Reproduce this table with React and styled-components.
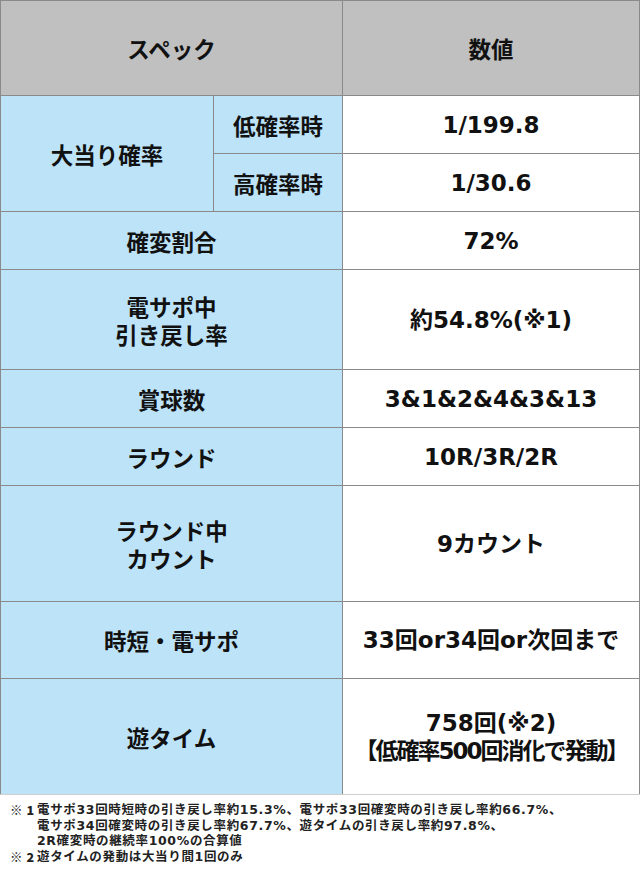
import React from 'react';
import styled, { createGlobalStyle } from 'styled-components';

// reseteo basico de la pagina
const GlobalStyle = createGlobalStyle`
  * {
    margin: 0;
    padding: 0;
    box-sizing: border-box;
  }
  body {
    background: #fff;
    font-family: "DejaVu Sans", "Noto Sans CJK JP", sans-serif;
    color: #111;
  }
`;

const Page = styled.div`
  width: 640px;
  height: 872px;
  background: #fff;
`;

// la tabla se arma con grid; el gap hace de linea de borde
const SpecGrid = styled.div`
  display: grid;
  grid-template-columns: 212px 128px 1fr;
  grid-template-rows: 94px 57px 57px 57px 99px 57px 57px 115px 76px 115px;
  gap: 1px;
  padding: 1px 1px 0 1px;
  background: #8a8a8a;
  border-bottom: 1px solid #cfcfcf;
`;

const Cell = styled.div`
  display: flex;
  align-items: center;
  justify-content: center;
  text-align: center;
  font-weight: 700;
  font-size: 22.5px;
  line-height: 28px;
  color: #111;
  grid-column: ${(p) => p.$col || 'auto'};
  grid-row: ${(p) => p.$row || 'auto'};
`;

const HeadCell = styled(Cell)`
  background: #c0c0c0;
  font-family: "Noto Sans CJK JP", sans-serif;
`;

const LabelCell = styled(Cell)`
  background: #bce3f8;
  font-family: "Noto Sans CJK JP", sans-serif;
`;

const ValueCell = styled(Cell)`
  background: #fff;
  font-size: 23px;
  font-family: "DejaVu Sans", "Noto Sans CJK JP", sans-serif;
`;

const Lines = styled.div`
  display: flex;
  flex-direction: column;
  align-items: center;
`;

const Line = styled.span`
  white-space: nowrap;
  letter-spacing: ${(p) => (p.$tight ? '-2px' : '0')};
`;

const Notes = styled.div`
  padding: 7px 0 0 10px;
  font-family: "DejaVu Sans", "Noto Sans CJK JP", sans-serif;
  font-weight: 700;
  font-size: 12.5px;
  line-height: 15.5px;
  letter-spacing: 0.65px;
  color: #222;
`;

const NoteRow = styled.div`
  display: grid;
  grid-template-columns: 27px 1fr;
`;

const NoteMark = styled.span`
  display: flex;
  gap: 4px;
  letter-spacing: 0;
  font-family: "Noto Sans CJK JP", sans-serif;
  font-weight: 900;
`;

const NoteText = styled.div`
  display: flex;
  flex-direction: column;
  white-space: nowrap;
`;

const rows = [
  { label: '確変割合', value: '72%' },
  { label: ['電サポ中', '引き戻し率'], value: '約54.8%(※1)' },
  { label: '賞球数', value: '3&1&2&4&3&13' },
  { label: 'ラウンド', value: '10R/3R/2R' },
  { label: ['ラウンド中', 'カウント'], value: '9カウント' },
  { label: '時短・電サポ', value: '33回or34回or次回まで' },
  { label: '遊タイム', value: ['758回(※2)', '【低確率500回消化で発動】'], tight: 1 },
];

function Text({ value, tight }) {
  if (Array.isArray(value)) {
    return (
      <Lines>
        {value.map((v, i) => (
          <Line key={v} $tight={tight === i}>
            {v}
          </Line>
        ))}
      </Lines>
    );
  }
  return value;
}

export default function App() {
  return (
    <>
      <GlobalStyle />
      <Page>
        <SpecGrid>
          <HeadCell $col="1 / 3">スペック</HeadCell>
          <HeadCell>数値</HeadCell>

          <LabelCell $row="2 / 4">大当り確率</LabelCell>
          <LabelCell>低確率時</LabelCell>
          <ValueCell>1/199.8</ValueCell>
          <LabelCell>高確率時</LabelCell>
          <ValueCell>1/30.6</ValueCell>

          {rows.map((r, i) => (
            <React.Fragment key={i}>
              <LabelCell $col="1 / 3">
                <Text value={r.label} />
              </LabelCell>
              <ValueCell>
                <Text value={r.value} tight={r.tight} />
              </ValueCell>
            </React.Fragment>
          ))}
        </SpecGrid>

        <Notes>
          <NoteRow>
            <NoteMark>
              <span>※</span>
              <span>1</span>
            </NoteMark>
            <NoteText>
              <span>電サポ33回時短時の引き戻し率約15.3%、電サポ33回確変時の引き戻し率約66.7%、</span>
              <span>電サポ34回確変時の引き戻し率約67.7%、遊タイムの引き戻し率約97.8%、</span>
              <span>2R確変時の継続率100%の合算値</span>
            </NoteText>
          </NoteRow>
          <NoteRow>
            <NoteMark>
              <span>※</span>
              <span>2</span>
            </NoteMark>
            <NoteText>
              <span>遊タイムの発動は大当り間1回のみ</span>
            </NoteText>
          </NoteRow>
        </Notes>
      </Page>
    </>
  );
}
